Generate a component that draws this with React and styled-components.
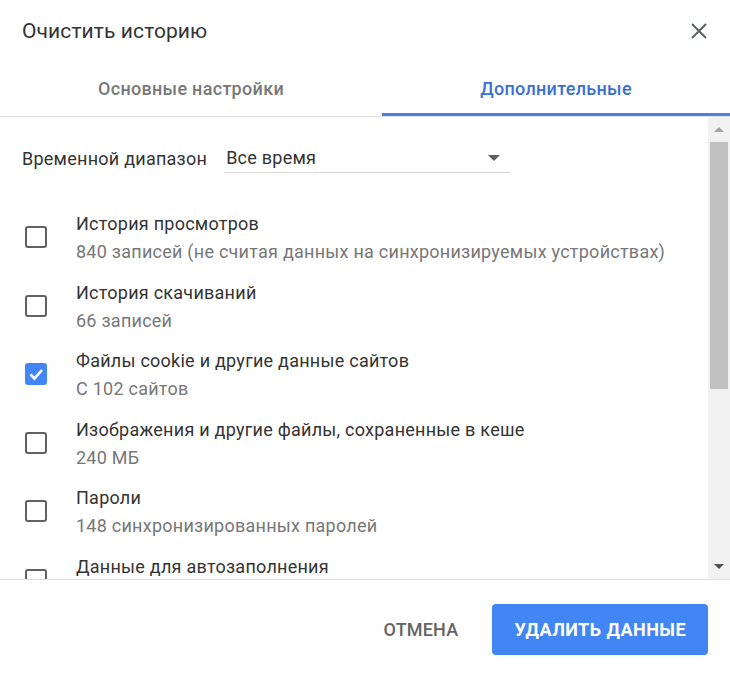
import React from "react";
import styled, { createGlobalStyle } from "styled-components";

const GlobalStyle = createGlobalStyle`
  html, body {
    margin: 0;
    padding: 0;
    background: #fff;
  }
  body {
    font-family: Roboto, "Noto Sans", "Liberation Sans", sans-serif;
    color: #333;
  }
`;

// whole dialog fills the window
const Dialog = styled.div`
  width: 730px;
  height: 677px;
  display: flex;
  flex-direction: column;
  background: #fff;
  overflow: hidden;
`;

const Header = styled.div`
  height: 60px;
  box-sizing: border-box;
  padding: 19px 22px 0 22px;
  display: flex;
  justify-content: space-between;
  align-items: flex-start;
`;

const Title = styled.h1`
  margin: 0;
  font-size: 21px;
  line-height: 25px;
  font-weight: 400;
  letter-spacing: 0.1px;
  color: #333;
`;

const CloseButton = styled.button`
  border: 0;
  background: none;
  padding: 0;
  margin-top: 3px;
  width: 18px;
  height: 18px;
  cursor: pointer;
  display: flex;
`;

const TabBar = styled.div`
  display: grid;
  grid-template-columns: 382px 1fr;
  border-bottom: 1px solid #e0e0e0;
`;

const Tab = styled.div`
  height: 56px;
  box-sizing: border-box;
  padding-top: 2px;
  display: flex;
  align-items: center;
  justify-content: center;
  font-size: 18px;
  line-height: 20px;
  font-weight: 500;
  letter-spacing: 0.3px;
  color: ${(p) => (p.$active ? "#3b6fd6" : "#787878")};
  box-shadow: ${(p) => (p.$active ? "inset 0 -3px 0 #4a80e0" : "none")};
`;

const Main = styled.div`
  flex: 1;
  display: flex;
  min-height: 0;
  border-bottom: 1px solid #e0e0e0;
`;

const ScrollBody = styled.div`
  flex: 1;
  overflow: hidden;
  padding: 27px 0 0 22px;
`;

const TimeRow = styled.div`
  display: flex;
  align-items: center;
  gap: 17px;
`;

const Label = styled.span`
  font-size: 18px;
  line-height: 20px;
  letter-spacing: 0.25px;
  color: #333;
`;

const Select = styled.div`
  width: 286px;
  height: 29px;
  box-sizing: border-box;
  border-bottom: 1px solid #d6d6d6;
  padding: 0 10px 0 2px;
  display: flex;
  align-items: center;
  justify-content: space-between;
  font-size: 18px;
  line-height: 20px;
  letter-spacing: 0.25px;
  color: #333;
`;

const Caret = styled.span`
  width: 0;
  height: 0;
  border-left: 6px solid transparent;
  border-right: 6px solid transparent;
  border-top: 6px solid #5f5f5f;
`;

const List = styled.div`
  margin-top: 39px;
  display: flex;
  flex-direction: column;
  gap: 12.5px;
`;

const Item = styled.div`
  display: flex;
  align-items: flex-start;
`;

const Check = styled.span`
  flex: none;
  width: 22px;
  height: 22px;
  box-sizing: border-box;
  margin: 14px 0 0 3px;
  border-radius: 3px;
  border: ${(p) => (p.$checked ? "none" : "2px solid #616161")};
  background: ${(p) => (p.$checked ? "#4285f4" : "#fff")};
  display: flex;
  align-items: center;
  justify-content: center;
`;

const ItemText = styled.div`
  margin-left: 29px;
  display: flex;
  flex-direction: column;
`;

const ItemTitle = styled.span`
  font-size: 18px;
  line-height: 24px;
  letter-spacing: 0.25px;
  color: #333;
  white-space: nowrap;
`;

const ItemSub = styled.span`
  font-size: 18px;
  line-height: 32px;
  letter-spacing: 0.25px;
  color: #777;
  white-space: nowrap;
`;

const Scrollbar = styled.div`
  width: 22px;
  flex: none;
  background: #f1f1f1;
  display: flex;
  flex-direction: column;
`;

const ScrollArrow = styled.div`
  height: 25px;
  display: flex;
  align-items: center;
  justify-content: center;
`;

const Thumb = styled.div`
  height: 247px;
  margin: 0 2px;
  background: #c1c1c1;
`;

const Spacer = styled.div`
  flex: 1;
`;

const Tri = styled.span`
  width: 0;
  height: 0;
  border-left: 5px solid transparent;
  border-right: 5px solid transparent;
  ${(p) =>
    p.$up
      ? `border-bottom: 5px solid #a3a3a3;`
      : `border-top: 5px solid #505050;`}
`;

const Footer = styled.div`
  height: 97px;
  box-sizing: border-box;
  padding: 24px 22px 0 0;
  display: flex;
  justify-content: flex-end;
  align-items: flex-start;
  gap: 17px;
`;

const Button = styled.button`
  height: 51px;
  border: 0;
  border-radius: 4px;
  font-family: inherit;
  font-size: 18px;
  font-weight: ${(p) => (p.$primary ? 700 : 500)};
  letter-spacing: ${(p) => (p.$primary ? "0.45px" : "0.2px")};
  cursor: pointer;
  padding: ${(p) => (p.$primary ? "0 22px" : "0 17px")};
  background: ${(p) => (p.$primary ? "#4285f4" : "transparent")};
  color: ${(p) => (p.$primary ? "#fff" : "#646464")};
`;

const items = [
  {
    title: "История просмотров",
    sub: "840 записей (не считая данных на синхронизируемых устройствах)",
  },
  { title: "История скачиваний", sub: "66 записей" },
  { title: "Файлы cookie и другие данные сайтов", sub: "С 102 сайтов", checked: true },
  { title: "Изображения и другие файлы, сохраненные в кеше", sub: "240 МБ" },
  { title: "Пароли", sub: "148 синхронизированных паролей" },
  { title: "Данные для автозаполнения", sub: "" },
];

const App = () => {
  return (
    <>
      <GlobalStyle />
      <Dialog>
        <Header>
          <Title>Очистить историю</Title>
          <CloseButton aria-label="close">
            <svg width="18" height="18" viewBox="0 0 18 18">
              <path d="M2 2 L16 16 M16 2 L2 16" stroke="#5f6368" strokeWidth="2" />
            </svg>
          </CloseButton>
        </Header>

        <TabBar>
          <Tab>Основные настройки</Tab>
          <Tab $active>Дополнительные</Tab>
        </TabBar>

        <Main>
          <ScrollBody>
            <TimeRow>
              <Label>Временной диапазон</Label>
              <Select>
                <span>Все время</span>
                <Caret />
              </Select>
            </TimeRow>

            <List>
              {items.map((it) => (
                <Item key={it.title}>
                  <Check $checked={it.checked}>
                    {it.checked && (
                      <svg width="18" height="18" viewBox="0 0 18 18">
                        <path d="M3.5 9.5 L7.5 13.5 L15 5" fill="none" stroke="#fff" strokeWidth="2.6" />
                      </svg>
                    )}
                  </Check>
                  <ItemText>
                    <ItemTitle>{it.title}</ItemTitle>
                    <ItemSub>{it.sub}</ItemSub>
                  </ItemText>
                </Item>
              ))}
            </List>
          </ScrollBody>

          <Scrollbar>
            <ScrollArrow>
              <Tri $up />
            </ScrollArrow>
            <Thumb />
            <Spacer />
            <ScrollArrow>
              <Tri />
            </ScrollArrow>
          </Scrollbar>
        </Main>

        <Footer>
          <Button>ОТМЕНА</Button>
          <Button $primary>УДАЛИТЬ ДАННЫЕ</Button>
        </Footer>
      </Dialog>
    </>
  );
};

export default App;
